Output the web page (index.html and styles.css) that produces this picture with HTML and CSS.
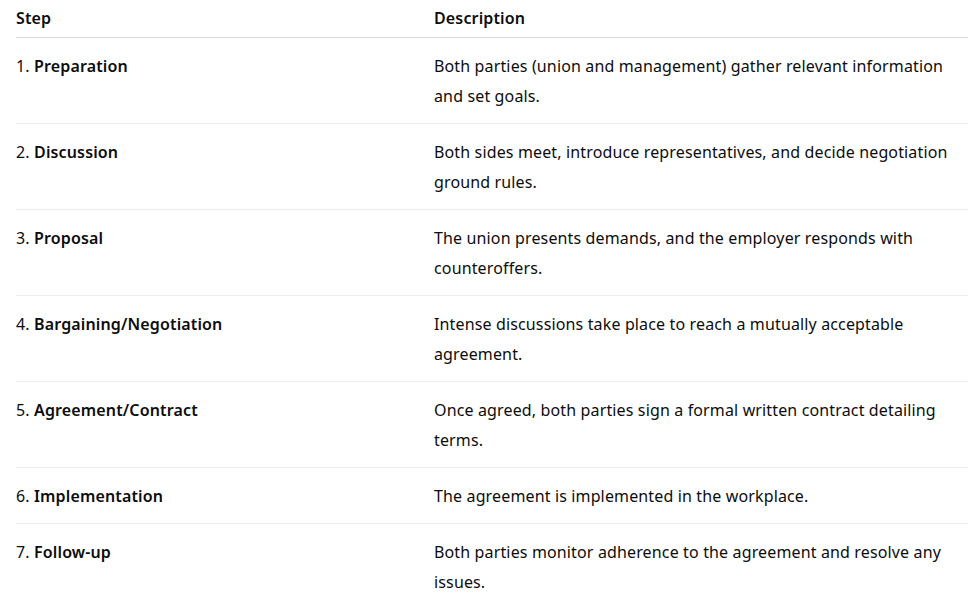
FILE: index.html
```html
<!DOCTYPE html>
<html lang="en">
<head>
<meta charset="utf-8">
<title>Collective bargaining steps</title>
<link rel="stylesheet" href="styles.css">
</head>
<body>
<div class="wrap">
  <table class="steps">
    <thead>
      <tr><th class="col-step">Step</th><th class="col-desc">Description</th></tr>
    </thead>
    <tbody>
      <tr><td>1. <strong>Preparation</strong></td><td>Both parties (union and management) gather relevant information and set goals.</td></tr>
      <tr><td>2. <strong>Discussion</strong></td><td>Both sides meet, introduce representatives, and decide negotiation ground rules.</td></tr>
      <tr><td>3. <strong>Proposal</strong></td><td>The union presents demands, and the employer responds with counteroffers.</td></tr>
      <tr><td>4. <strong>Bargaining/Negotiation</strong></td><td>Intense discussions take place to reach a mutually acceptable agreement.</td></tr>
      <tr><td>5. <strong>Agreement/Contract</strong></td><td>Once agreed, both parties sign a formal written contract detailing terms.</td></tr>
      <tr><td>6. <strong>Implementation</strong></td><td>The agreement is implemented in the workplace.</td></tr>
      <tr><td>7. <strong>Follow-up</strong></td><td>Both parties monitor adherence to the agreement and resolve any issues.</td></tr>
    </tbody>
  </table>
</div>
</body>
</html>
```
FILE: styles.css
```css
html, body {
  margin: 0;
  padding: 0;
  background: #ffffff;
}

body {
  font-family: "Noto Sans", "Open Sans", sans-serif;
  font-size: 16px;
  letter-spacing: 0.14px;
  color: #0d0d0d;
}

.wrap {
  padding-left: 16px;
}

.steps {
  border-collapse: collapse;
  table-layout: fixed;
  width: 952px;
}

.col-step {
  width: 418px;
}

.steps th,
.steps td {
  padding: 13px 0 12px 0;
  line-height: 30px;
  text-align: left;
  vertical-align: top;
}

.steps th {
  font-weight: 600;
  padding: 3px 0 4px 0;
  border-bottom: 1px solid #d9d9d9;
}

.steps td {
  border-bottom: 1px solid #ececec;
}

.steps strong {
  font-weight: 600;
}
```
